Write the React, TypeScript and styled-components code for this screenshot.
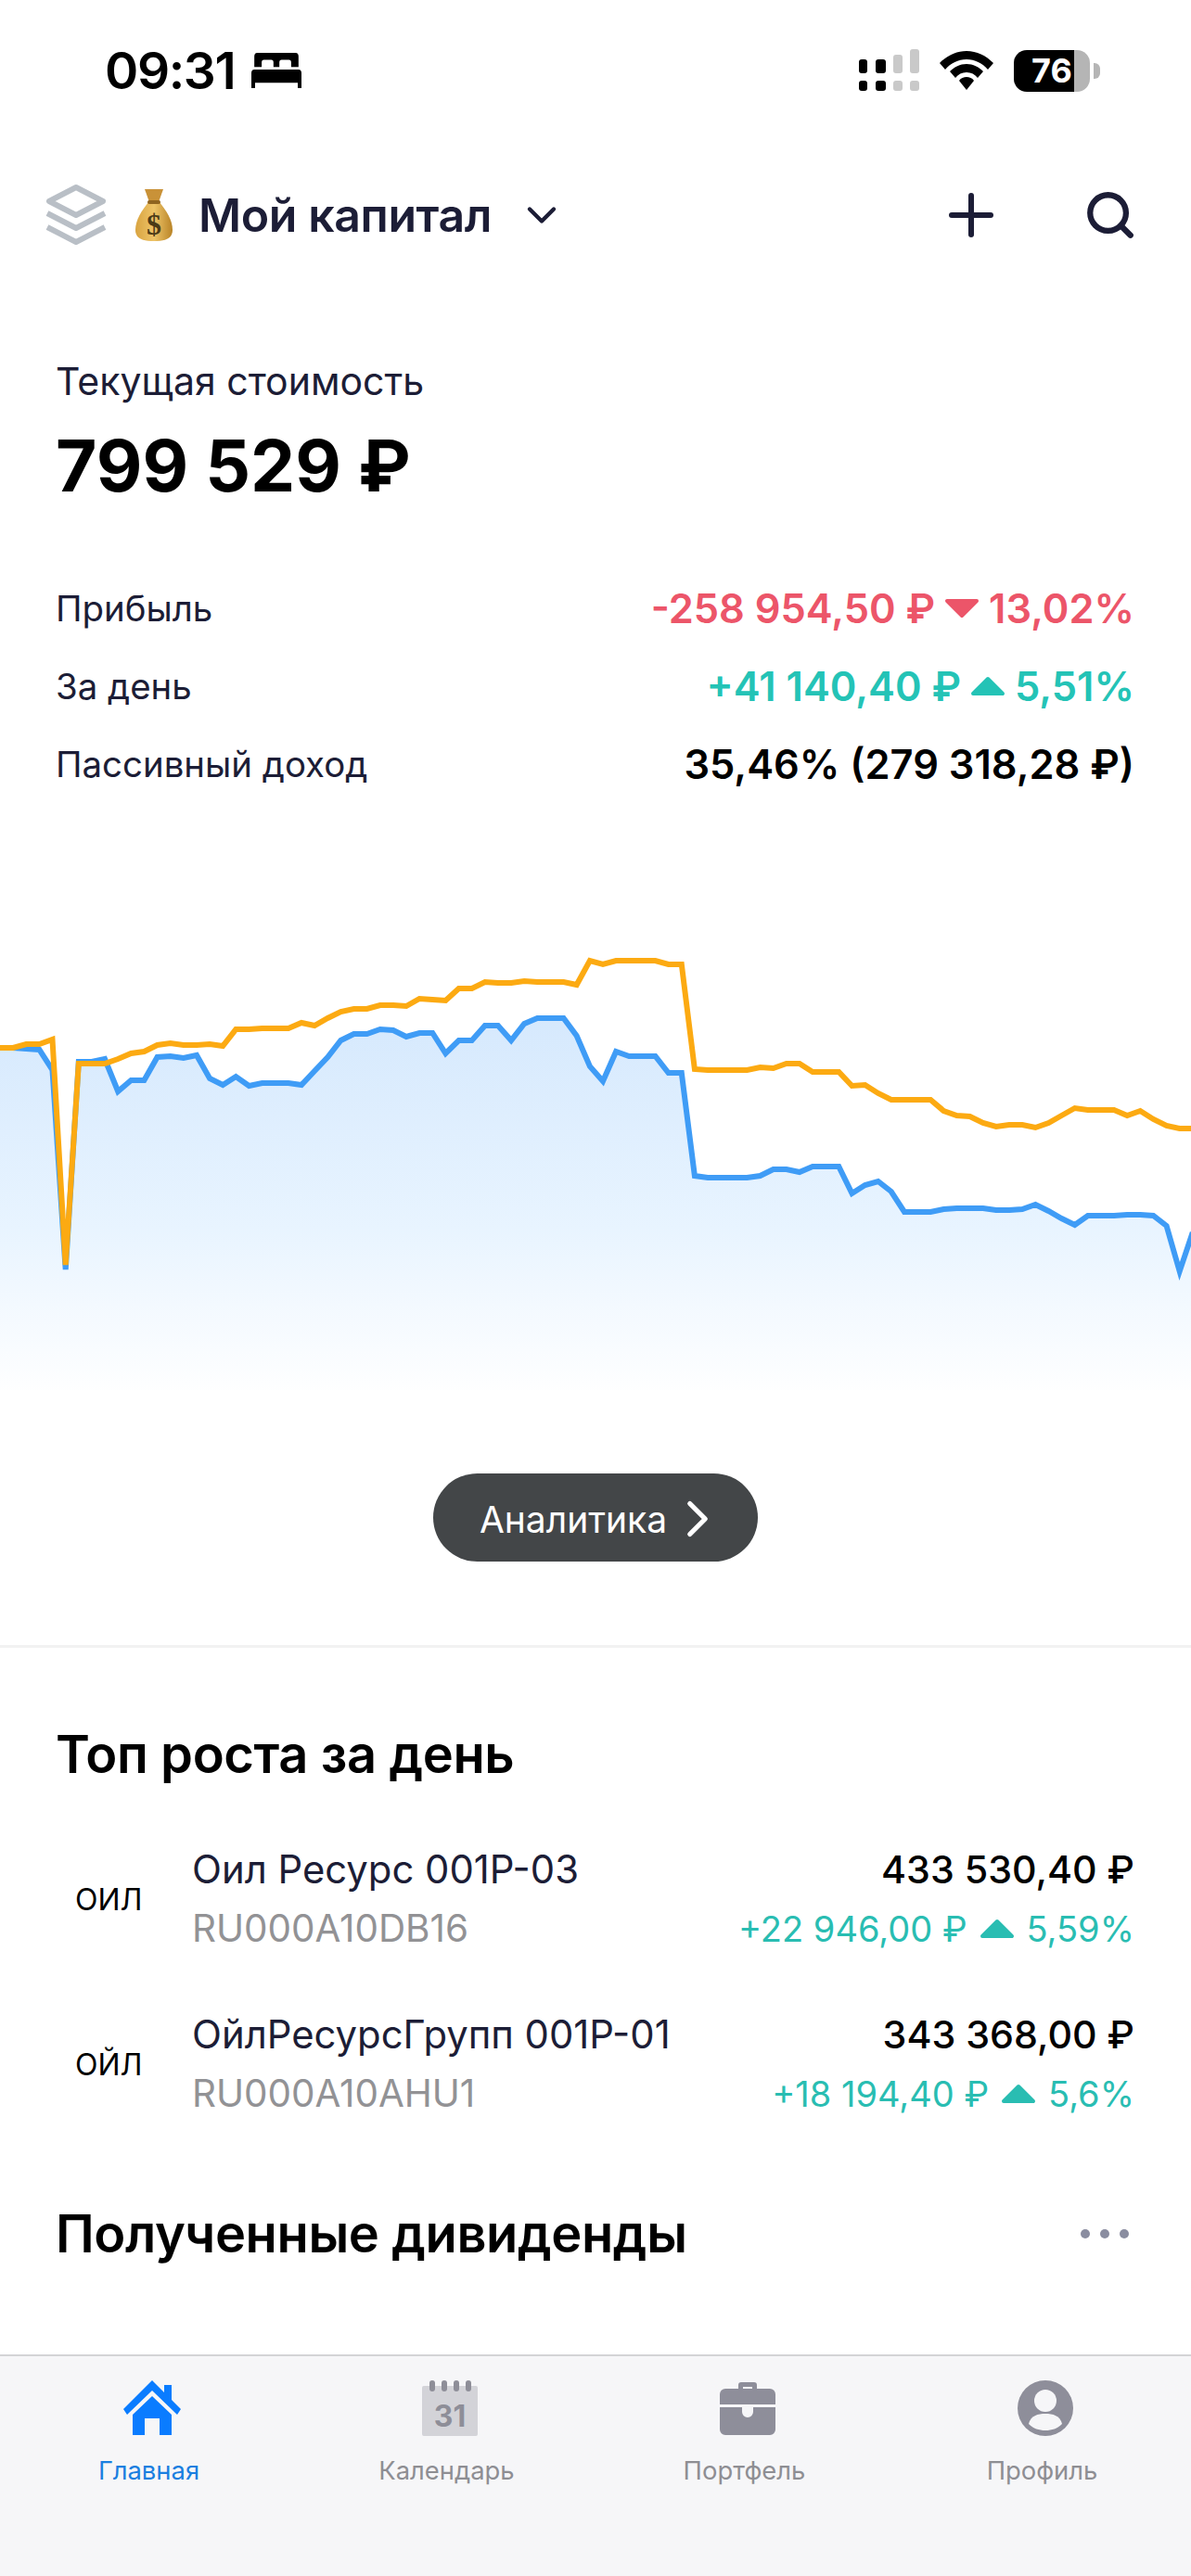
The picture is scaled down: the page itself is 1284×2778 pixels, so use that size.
import styled, { createGlobalStyle } from "styled-components";
import { ChevronDown, Plus, Search, ChevronRight } from "lucide-react";

const STEP = 14.13;

const orangeLine = [
  1131, 1131, 1127, 1127, 1122, 1365, 1148, 1148, 1148, 1143, 1137, 1135, 1128, 1126, 1128, 1128, 1127, 1129, 1111,
  1111, 1110, 1110, 1110, 1104, 1107, 1099, 1092, 1089, 1089, 1085, 1085, 1086, 1078, 1079, 1080, 1067, 1067, 1060,
  1061, 1061, 1059, 1060, 1060, 1060, 1063, 1037, 1041, 1037, 1037, 1037, 1037, 1041, 1041, 1154, 1155, 1155, 1155,
  1155, 1152, 1153, 1148, 1148, 1157, 1157, 1157, 1172, 1171, 1180, 1187, 1187, 1187, 1187, 1199, 1204, 1205, 1212,
  1216, 1214, 1214, 1217, 1212, 1204, 1196, 1198, 1198, 1198, 1204, 1199, 1208, 1215, 1218, 1218,
];

const blueLine = [
  1131, 1131, 1132, 1133, 1155, 1370, 1146, 1146, 1143, 1178, 1166, 1166, 1141, 1140, 1142, 1139, 1164, 1171, 1162,
  1172, 1169, 1169, 1169, 1171, 1156, 1141, 1123, 1116, 1116, 1111, 1112, 1119, 1115, 1115, 1137, 1123, 1123, 1107,
  1107, 1123, 1105, 1099, 1099, 1099, 1118, 1151, 1167, 1135, 1140, 1140, 1140, 1158, 1158, 1269, 1271, 1271, 1271,
  1271, 1269, 1262, 1262, 1265, 1259, 1259, 1259, 1288, 1279, 1275, 1286, 1308, 1308, 1308, 1305, 1304, 1304, 1304,
  1306, 1306, 1305, 1300, 1307, 1315, 1322, 1312, 1312, 1312, 1311, 1311, 1312, 1323, 1372, 1330,
];

const toPoints = (line: number[]) => line.map((y, i) => `${(i * STEP).toFixed(1)},${y}`).join(" ");

const GlobalStyle = createGlobalStyle`
  html, body {
    margin: 0;
    padding: 0;
    background: #fff;
  }
  * {
    box-sizing: border-box;
  }
`;

const Page = styled.div`
  width: 1284px;
  height: 2778px;
  display: flex;
  flex-direction: column;
  overflow: hidden;
  background: #fff;
  font-family: Inter, "Noto Sans", sans-serif;
  color: #000;
`;

const StatusBar = styled.div`
  height: 70px;
  margin-top: 41px;
  padding: 0 109px 0 113px;
  display: flex;
  align-items: center;
  justify-content: space-between;
`;

const StatusLeft = styled.div`
  display: flex;
  align-items: center;
  gap: 18px;
`;

const Time = styled.span`
  font-size: 55px;
  font-weight: 600;
  letter-spacing: -1.4px;
`;

const StatusRight = styled.div`
  display: flex;
  align-items: center;
  gap: 22px;
`;

const Battery = styled.div`
  position: relative;
  width: 82px;
  height: 45px;
  border-radius: 14px;
  background: linear-gradient(90deg, #000 0 79%, #b5b5b5 79% 100%);
  color: #fff;
  font-size: 36px;
  font-weight: 700;
  display: flex;
  align-items: center;
  justify-content: center;
  &::after {
    content: "";
    position: absolute;
    right: -11px;
    top: 14px;
    width: 7px;
    height: 17px;
    border-radius: 0 6px 6px 0;
    background: #b5b5b5;
  }
`;

const Header = styled.header`
  height: 80px;
  margin-top: 81px;
  padding: 0 58px 0 48px;
  display: flex;
  align-items: center;
  justify-content: space-between;
`;

const Brand = styled.div`
  display: flex;
  align-items: center;
`;

const BrandTitle = styled.h1`
  margin: 0 0 0 27px;
  font-size: 50px;
  font-weight: 600;
  letter-spacing: -0.4px;
  color: #1c1d36;
`;

const BrandCaret = styled(ChevronDown)`
  margin-left: 28px;
  color: #1c1d36;
`;

const HeaderActions = styled.div`
  display: flex;
  align-items: center;
  gap: 85px;
  color: #1c1d36;
`;

const Summary = styled.section`
  margin-top: 114px;
  padding: 0 61px 0 60px;
`;

const SummaryLabel = styled.div`
  font-size: 41px;
  line-height: 50px;
  color: #1c1d36;
`;

const SummaryValue = styled.div`
  margin-top: 21px;
  font-size: 76.5px;
  line-height: 90px;
  font-weight: 700;
`;

const Stats = styled.div`
  margin-top: 67px;
`;

const StatRow = styled.div`
  height: 84px;
  display: flex;
  align-items: center;
  justify-content: space-between;
`;

const StatLabel = styled.span`
  font-size: 38.4px;
  color: #1c1d36;
`;

const StatValue = styled.span<{ $color: string }>`
  display: inline-flex;
  align-items: center;
  gap: 10px;
  font-size: 43.4px;
  font-weight: 600;
  color: ${({ $color }) => $color};
`;

const Chart = styled.svg`
  display: block;
  margin-top: 113px;
  flex-shrink: 0;
`;

const ButtonRow = styled.div`
  margin-top: 90px;
  display: flex;
  justify-content: center;
`;

const AnalyticsButton = styled.button`
  width: 350px;
  height: 95px;
  padding: 3px 0 0 18px;
  border: 0;
  border-radius: 48px;
  background: #434648;
  color: #fff;
  font-family: inherit;
  font-size: 39px;
  display: flex;
  align-items: center;
  justify-content: center;
  gap: 0;
`;

const Divider = styled.hr`
  margin: 90px 0 0;
  height: 3px;
  border: 0;
  background: #f2f2f2;
`;

const Section = styled.section`
  padding: 0 61px 0 60px;
`;

const SectionHead = styled.div<{ $top: number }>`
  margin-top: ${({ $top }) => $top}px;
  display: flex;
  align-items: center;
  justify-content: space-between;
`;

const SectionTitle = styled.h2`
  margin: 0;
  font-size: 56px;
  line-height: 70px;
  font-weight: 600;
  letter-spacing: -0.4px;
`;

const DotsSlot = styled.div`
  margin-right: 5px;
  display: flex;
`;

const TopList = styled.div`
  margin-top: 64px;
  display: flex;
  flex-direction: column;
  gap: 64px;
`;

const TopRow = styled.div`
  display: grid;
  grid-template-columns: 147px 1fr auto;
  align-items: center;
`;

const Ticker = styled.span`
  padding-left: 21px;
  font-size: 32px;
`;

const ItemColumn = styled.div<{ $end?: boolean }>`
  display: flex;
  flex-direction: column;
  gap: 14px;
  align-items: ${({ $end }) => ($end ? "flex-end" : "flex-start")};
`;

const ItemName = styled.span`
  font-size: 41.8px;
  line-height: 50px;
  color: #1c1d36;
`;

const ItemCode = styled.span`
  font-size: 40.4px;
  line-height: 50px;
  color: #929295;
`;

const ItemPrice = styled.span`
  font-size: 41.2px;
  line-height: 50px;
  font-weight: 500;
`;

const ItemChange = styled.span`
  display: inline-flex;
  align-items: center;
  gap: 13px;
  font-size: 38px;
  line-height: 50px;
  color: #29bdb2;
`;

const TabBar = styled.nav`
  margin-top: auto;
  height: 239px;
  padding-top: 26px;
  border-top: 2px solid #d4d4d6;
  background: #f6f6f8;
  display: grid;
  grid-template-columns: repeat(4, 1fr);
  align-items: start;
`;

const Tab = styled.div<{ $active?: boolean }>`
  display: flex;
  flex-direction: column;
  align-items: center;
  gap: 17px;
  font-size: 27.4px;
  line-height: 40px;
  color: ${({ $active }) => ($active ? "#1a7fe0" : "#8e8e93")};
  svg {
    margin-left: 6px;
  }
`;

const Triangle = ({ up, color }: { up?: boolean; color: string }) => (
  <svg width="38" height="22" viewBox="0 0 38 22">
    <path
      d={up ? "M19 3 L35 19 H3 Z" : "M3 3 H35 L19 19 Z"}
      fill={color}
      stroke={color}
      strokeWidth="4"
      strokeLinejoin="round"
    />
  </svg>
);

const Bed = () => (
  <svg width="54" height="38" viewBox="0 0 68 40" preserveAspectRatio="none">
    <path
      d="M8 0 H60 a4 4 0 0 1 4 4 V16 H54 V11 a3 3 0 0 0 -3 -3 H41 a3 3 0 0 0 -3 3 V16 H30 V11 a3 3 0 0 0 -3 -3 H17 a3 3 0 0 0 -3 3 V16 H4 V4 a4 4 0 0 1 4 -4 Z"
      fill="#000"
    />
    <path d="M4 19 H64 a4 4 0 0 1 4 4 V40 H63 V34 H5 V40 H0 V23 a4 4 0 0 1 4 -4 Z" fill="#000" />
  </svg>
);

const Signal = () => (
  <svg width="66" height="46" viewBox="0 0 66 46">
    <rect x="1" y="11" width="9" height="15" rx="3" fill="#000" />
    <rect x="1" y="34" width="9" height="11" rx="3" fill="#000" />
    <rect x="19" y="11" width="11" height="15" rx="3" fill="#000" />
    <rect x="19" y="34" width="11" height="11" rx="3" fill="#000" />
    <rect x="38" y="6" width="10" height="20" rx="3" fill="#c9c9c9" />
    <rect x="38" y="34" width="10" height="11" rx="3" fill="#c9c9c9" />
    <rect x="56" y="0" width="10" height="26" rx="3" fill="#c9c9c9" />
    <rect x="56" y="34" width="10" height="11" rx="3" fill="#c9c9c9" />
  </svg>
);

const Wifi = () => (
  <svg width="58" height="42" viewBox="0 0 58 42">
    <path d="M29 0 C40 0 50 5 58 13 L52 20 C46 13 38 9 29 9 C20 9 12 13 6 20 L0 13 C8 5 18 0 29 0 Z" fill="#000" />
    <path d="M29 14 C36 14 42 17 47 22 L41 29 C38 25 34 23 29 23 C24 23 20 25 17 29 L11 22 C16 17 22 14 29 14 Z" fill="#000" />
    <path d="M29 28 C32 28 35 29 37 32 L29 42 L21 32 C23 29 26 28 29 28 Z" fill="#000" />
  </svg>
);

const Layers = () => (
  <svg width="68" height="68" viewBox="0 0 68 68" fill="none" stroke="#b9bfc6" strokeWidth="6" strokeLinejoin="round">
    <path d="M34 4 L63 19 L34 34 L5 19 Z" />
    <path d="M3 32 L34 48 L65 32" />
    <path d="M3 47 L34 63 L65 47" />
  </svg>
);

const BagSvg = styled.svg`
  margin-left: 29px;
`;

const MoneyBag = () => (
  <BagSvg width="42" height="58" viewBox="0 0 42 58">
    <defs>
      <linearGradient id="bag" x1="0" y1="0" x2="1" y2="0">
        <stop offset="0" stopColor="#d9a441" />
        <stop offset="0.5" stopColor="#eec468" />
        <stop offset="1" stopColor="#b98427" />
      </linearGradient>
    </defs>
    <path d="M11 1 L31 1 L26 15 L16 15 Z" fill="#c99238" />
    <path d="M15 15 C8 24 1 34 1 45 C1 54 8 57 21 57 C34 57 41 54 41 45 C41 34 34 24 27 15 Z" fill="url(#bag)" />
    <rect x="14" y="13" width="14" height="4" rx="2" fill="#8f6420" />
    <text x="21" y="50" textAnchor="middle" fontFamily="Liberation Serif, serif" fontSize="32" fontWeight="700" fill="#4b3a17">
      $
    </text>
  </BagSvg>
);

const DotsIcon = () => (
  <svg width="54" height="12" viewBox="0 0 54 12" fill="#8a8da0">
    <circle cx="6" cy="6" r="5" />
    <circle cx="27" cy="6" r="5" />
    <circle cx="48" cy="6" r="5" />
  </svg>
);

const HomeIcon = () => (
  <svg width="62" height="60" viewBox="0 0 62 60" fill="#0a7cff">
    <path d="M31 0 L44 13 V5 H52 V21 L62 31 L58 37 L31 11 L4 37 L0 31 Z" />
    <path d="M31 17 L52 37 V59 H39 V41 H23 V59 H10 V37 Z" />
  </svg>
);

const CalendarIcon = () => (
  <svg width="60" height="60" viewBox="0 0 60 60">
    <rect x="0" y="6" width="60" height="54" rx="2" fill="#d3d3d8" />
    <rect x="8" y="0" width="6" height="12" rx="3" fill="#8e8e98" />
    <rect x="21" y="0" width="6" height="12" rx="3" fill="#8e8e98" />
    <rect x="34" y="0" width="6" height="12" rx="3" fill="#8e8e98" />
    <rect x="47" y="0" width="6" height="12" rx="3" fill="#8e8e98" />
    <text x="30" y="50" textAnchor="middle" fontFamily="Inter, sans-serif" fontSize="32" fontWeight="700" fill="#8e8e98">
      31
    </text>
  </svg>
);

const CaseIcon = () => (
  <svg width="60" height="60" viewBox="0 0 60 60" fill="#8e8e9a">
    <path d="M20 10 V5 a3 3 0 0 1 3 -3 H37 a3 3 0 0 1 3 3 V10 H35 V7 H25 V10 Z" />
    <path d="M6 9 H54 a6 6 0 0 1 6 6 V26 H0 V15 a6 6 0 0 1 6 -6 Z" />
    <path d="M0 29 H24 V34 a6 6 0 0 0 12 0 V29 H60 V53 a6 6 0 0 1 -6 6 H6 a6 6 0 0 1 -6 -6 Z" />
  </svg>
);

const ProfileIcon = () => (
  <svg width="60" height="60" viewBox="0 0 60 60">
    <circle cx="30" cy="30" r="30" fill="#8e8e9a" />
    <circle cx="30" cy="22" r="12" fill="#f6f6f8" />
    <path d="M12 47 C14 38 22 36 30 36 C38 36 46 38 48 47 C43 52 37 54 30 54 C23 54 17 52 12 47 Z" fill="#f6f6f8" />
  </svg>
);

export default function App() {
  return (
    <Page>
      <GlobalStyle />
      <StatusBar>
        <StatusLeft>
          <Time>09:31</Time>
          <Bed />
        </StatusLeft>
        <StatusRight>
          <Signal />
          <Wifi />
          <Battery>76</Battery>
        </StatusRight>
      </StatusBar>

      <Header>
        <Brand>
          <Layers />
          <MoneyBag />
          <BrandTitle>Мой капитал</BrandTitle>
          <BrandCaret size={52} strokeWidth={2} />
        </Brand>
        <HeaderActions>
          <Plus size={72} strokeWidth={2} />
          <Search size={58} strokeWidth={2.6} />
        </HeaderActions>
      </Header>

      <Summary>
        <SummaryLabel>Текущая стоимость</SummaryLabel>
        <SummaryValue>799 529 ₽</SummaryValue>
        <Stats>
          <StatRow>
            <StatLabel>Прибыль</StatLabel>
            <StatValue $color="#ec5569">
              -258 954,50 ₽ <Triangle color="#ec5569" /> 13,02%
            </StatValue>
          </StatRow>
          <StatRow>
            <StatLabel>За день</StatLabel>
            <StatValue $color="#24c3b6">
              +41 140,40 ₽ <Triangle up color="#24c3b6" /> 5,51%
            </StatValue>
          </StatRow>
          <StatRow>
            <StatLabel>Пассивный доход</StatLabel>
            <StatValue $color="#000">35,46% (279 318,28 ₽)</StatValue>
          </StatRow>
        </Stats>
      </Summary>

      <Chart width="1284" height="520" viewBox="0 980 1284 520">
        <defs>
          <linearGradient id="area" x1="0" y1="1099" x2="0" y2="1510" gradientUnits="userSpaceOnUse">
            <stop offset="0" stopColor="#d6e9fd" />
            <stop offset="0.55" stopColor="#e8f4ff" />
            <stop offset="0.75" stopColor="#f3f9ff" />
            <stop offset="1" stopColor="#ffffff" />
          </linearGradient>
        </defs>
        <polygon points={`0,1500 ${toPoints(blueLine)} 1286,1500`} fill="url(#area)" />
        <polyline points={toPoints(blueLine)} fill="none" stroke="#3f9cf6" strokeWidth="6" />
        <polyline points={toPoints(orangeLine)} fill="none" stroke="#fcaa12" strokeWidth="6" />
      </Chart>

      <ButtonRow>
        <AnalyticsButton>
          Аналитика
          <ChevronRight size={66} strokeWidth={1.9} />
        </AnalyticsButton>
      </ButtonRow>
      <Divider />

      <Section>
        <SectionHead $top={80}>
          <SectionTitle>Топ роста за день</SectionTitle>
        </SectionHead>
        <TopList>
          <TopRow>
            <Ticker>ОИЛ</Ticker>
            <ItemColumn>
              <ItemName>Оил Ресурс 001Р-03</ItemName>
              <ItemCode>RU000A10DB16</ItemCode>
            </ItemColumn>
            <ItemColumn $end>
              <ItemPrice>433 530,40 ₽</ItemPrice>
              <ItemChange>
                +22 946,00 ₽ <Triangle up color="#29bdb2" /> 5,59%
              </ItemChange>
            </ItemColumn>
          </TopRow>
          <TopRow>
            <Ticker>ОЙЛ</Ticker>
            <ItemColumn>
              <ItemName>ОйлРесурсГрупп 001Р-01</ItemName>
              <ItemCode>RU000A10AHU1</ItemCode>
            </ItemColumn>
            <ItemColumn $end>
              <ItemPrice>343 368,00 ₽</ItemPrice>
              <ItemChange>
                +18 194,40 ₽ <Triangle up color="#29bdb2" /> 5,6%
              </ItemChange>
            </ItemColumn>
          </TopRow>
        </TopList>
        <SectionHead $top={91}>
          <SectionTitle>Полученные дивиденды</SectionTitle>
          <DotsSlot>
            <DotsIcon />
          </DotsSlot>
        </SectionHead>
      </Section>

      <TabBar>
        <Tab $active>
          <HomeIcon />
          Главная
        </Tab>
        <Tab>
          <CalendarIcon />
          Календарь
        </Tab>
        <Tab>
          <CaseIcon />
          Портфель
        </Tab>
        <Tab>
          <ProfileIcon />
          Профиль
        </Tab>
      </TabBar>
    </Page>
  );
}
